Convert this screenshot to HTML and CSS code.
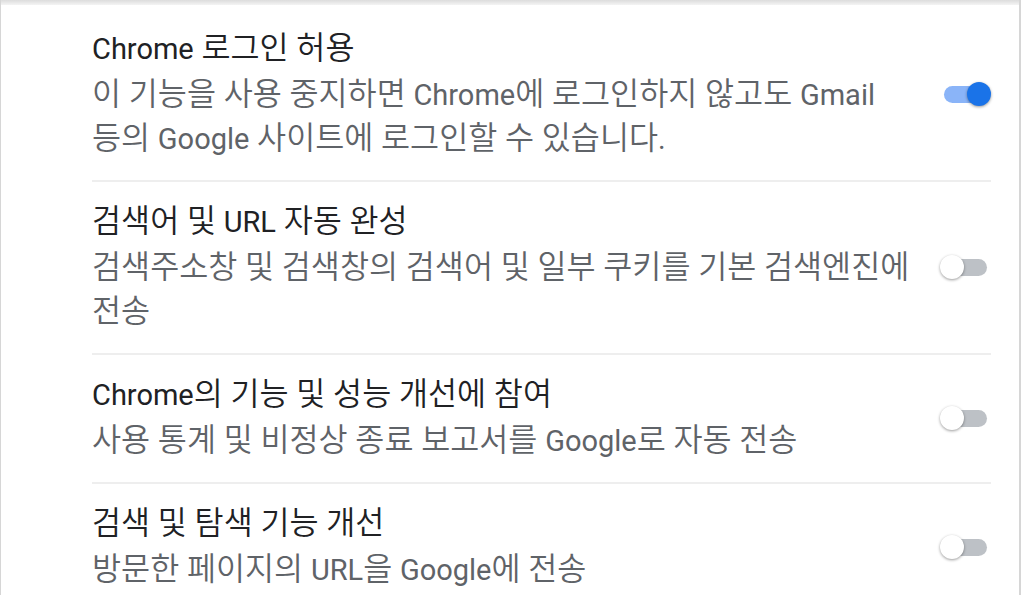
FILE: index.html
```html
<!DOCTYPE html>
<html lang="ko">
<head>
<meta charset="utf-8">
<link rel="stylesheet" href="styles.css">
</head>
<body>
<div class="card">
  <div class="row">
    <div class="text">
      <div class="title"><span class="en">Chrome</span> 로그인 허용</div>
      <div class="desc">이 기능을 사용 중지하면 <span class="en">Chrome</span>에 로그인하지 않고도 <span class="en">Gmail</span> 등의 <span class="en">Google</span> 사이트에 로그인할 수 있습니다<span class="en">.</span></div>
    </div>
    <div class="toggle on"><span class="track"></span><span class="knob"></span></div>
  </div>
  <div class="row">
    <div class="text">
      <div class="title">검색어 및 <span class="en">URL</span> 자동 완성</div>
      <div class="desc">검색주소창 및 검색창의 검색어 및 일부 쿠키를 기본 검색엔진에 전송</div>
    </div>
    <div class="toggle"><span class="track"></span><span class="knob"></span></div>
  </div>
  <div class="row">
    <div class="text">
      <div class="title"><span class="en">Chrome</span>의 기능 및 성능 개선에 참여</div>
      <div class="desc">사용 통계 및 비정상 종료 보고서를 <span class="en">Google</span>로 자동 전송</div>
    </div>
    <div class="toggle"><span class="track"></span><span class="knob"></span></div>
  </div>
  <div class="row">
    <div class="text">
      <div class="title">검색 및 탐색 기능 개선</div>
      <div class="desc">방문한 페이지의 <span class="en">URL</span>을 <span class="en">Google</span>에 전송</div>
    </div>
    <div class="toggle"><span class="track"></span><span class="knob"></span></div>
  </div>
</div>
</body>
</html>
```
FILE: styles.css
```css
html, body {
  margin: 0;
  padding: 0;
  background: #fff;
  overflow: hidden;
}
body {
  font-family: Roboto, "Noto Sans CJK KR", sans-serif;
  font-size: 31.6px;
  font-weight: 350;
  height: 595px;
}
.en {
  font-size: 29px;
  font-weight: 400;
  line-height: 1;
}
.card {
  box-sizing: border-box;
  width: 1021px;
  height: 595px;
  border-left: 1px solid #d6d6d6;
  border-right: 2px solid #d6d6d6;
  padding: 9px 28px 0 91px;
  position: relative;
}
.card::before {
  content: "";
  position: absolute;
  left: 0;
  right: 0;
  top: 0;
  height: 5px;
  background: linear-gradient(#dcdcdc, #f4f4f4);
}
.row {
  display: flex;
  align-items: center;
  padding: 18px 0 19px;
  border-top: 2px solid #eeeeee;
}
.row:first-child {
  border-top: none;
}
.text {
  flex: 1;
  margin-right: 20px;
  word-break: keep-all;
}
.title {
  color: #202124;
  line-height: 44px;
  margin-bottom: 2px;
}
.desc {
  color: #5f6368;
  line-height: 44px;
}
.toggle {
  position: relative;
  width: 51px;
  height: 24px;
  flex: none;
}
.track {
  position: absolute;
  left: 4px;
  top: 4px;
  width: 43px;
  height: 17px;
  border-radius: 9px;
  background: #bdc1c6;
}
.knob {
  position: absolute;
  left: 0;
  top: 0;
  width: 24px;
  height: 24px;
  border-radius: 50%;
  background: #fff;
  box-shadow: 0 1px 3px rgba(0, 0, 0, 0.4);
}
.toggle.on .track {
  background: #8ab4f8;
}
.toggle.on .knob {
  left: 27px;
  background: #1a73e8;
}
```
